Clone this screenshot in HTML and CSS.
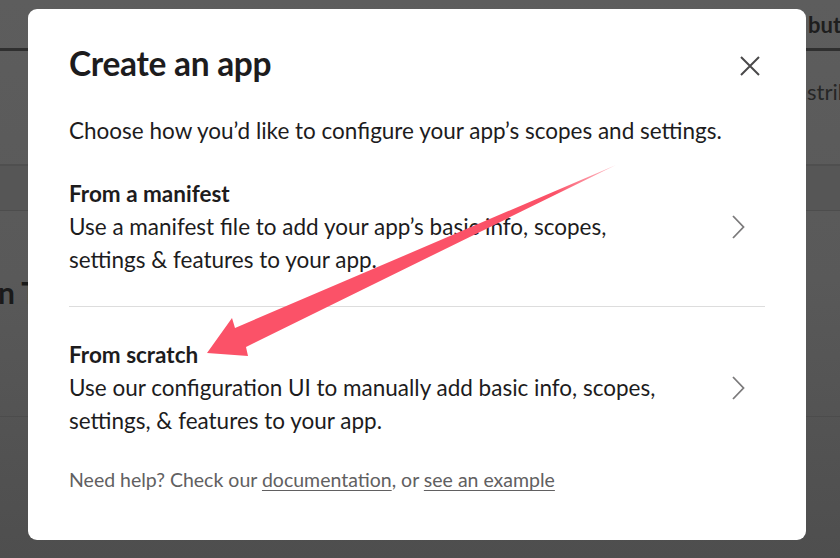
FILE: index.html
```html
<!DOCTYPE html>
<html lang="en">
<head>
<meta charset="utf-8">
<title>Create an app</title>
<link rel="stylesheet" href="styles.css">
</head>
<body>
<div class="page">
  <div class="page-top"><span class="tab">bution</span></div>
  <div class="page-sub"><span class="sub-text">stribution</span></div>
  <div class="page-band"></div>
  <div class="page-section"><span class="section-title">n Tools</span></div>
</div>

<div class="modal" role="dialog">
  <div class="modal-header">
    <h1 class="modal-title">Create an app</h1>
    <button class="close" aria-label="Close">
      <svg width="20" height="20" viewBox="0 0 20 20"><path d="M1 1 L19 19 M19 1 L1 19" stroke="#4a494a" stroke-width="2" fill="none"/></svg>
    </button>
  </div>
  <p class="modal-intro">Choose how you’d like to configure your app’s scopes and settings.</p>
  <div class="options">
    <div class="option">
      <div class="option-text">
        <div class="option-title">From a manifest</div>
        <div class="option-desc">Use a manifest file to add your app’s basic info, scopes,<br>settings &amp; features to your app.</div>
      </div>
      <svg class="chev" width="14" height="24" viewBox="0 0 14 24"><path d="M2 1 L12.5 12 L2 23" stroke="#7b7a7b" stroke-width="1.8" fill="none"/></svg>
    </div>
    <div class="option">
      <div class="option-text">
        <div class="option-title">From scratch</div>
        <div class="option-desc">Use our configuration UI to manually add basic info, scopes,<br>settings, &amp; features to your app.</div>
      </div>
      <svg class="chev" width="14" height="24" viewBox="0 0 14 24"><path d="M2 1 L12.5 12 L2 23" stroke="#7b7a7b" stroke-width="1.8" fill="none"/></svg>
    </div>
  </div>
  <p class="help">Need help? Check our <a href="#">documentation</a>, or <a href="#">see an example</a></p>
</div>

<svg class="annotation" width="840" height="558" viewBox="0 0 840 558">
  <defs>
    <linearGradient id="tail" x1="207" y1="352" x2="616" y2="165" gradientUnits="userSpaceOnUse">
      <stop offset="0" stop-color="#fb5268"/>
      <stop offset="0.85" stop-color="#fb5268"/>
      <stop offset="1" stop-color="#fb5268" stop-opacity="0.35"/>
    </linearGradient>
  </defs>
  <polygon points="207,353 232,318 235,328 616,165 246,347 248,356" fill="url(#tail)"/>
</svg>
</body>
</html>
```

FILE: styles.css
```css
html, body {
  margin: 0;
  padding: 0;
}
body {
  width: 840px;
  height: 558px;
  overflow: hidden;
  background: linear-gradient(180deg, #5d5d5d 0%, #595959 50%, #4e4e4e 100%);
  font-family: Lato, "Noto Sans", sans-serif;
  color: #1d1c1d;
  position: relative;
}

/* dimmed page behind the modal */
.page {
  width: 840px;
  height: 558px;
}
.page-top {
  height: 48px;
  border-bottom: 3px solid #2f2f2f;
  padding-left: 806px;
  overflow: hidden;
  white-space: nowrap;
}
.tab {
  display: block;
  margin-left: 2px;
  padding-top: 13px;
  font-size: 22px;
  font-weight: 700;
  color: #1e1e1e;
  line-height: 24px;
}
.page-sub {
  height: 113px;
  border-bottom: 2px solid #4f4f4f;
  padding-left: 806px;
  overflow: hidden;
  white-space: nowrap;
}
.sub-text {
  display: block;
  margin-left: 1px;
  padding-top: 28px;
  font-size: 22px;
  color: #262626;
  line-height: 26px;
}
.page-band {
  height: 44px;
  border-bottom: 1px solid #4d4d4d;
  background: #565656;
}
.page-section {
  height: 205px;
  border-bottom: 1px solid #4c4c4c;
  overflow: hidden;
  white-space: nowrap;
}
.section-title {
  display: block;
  margin-left: -2px;
  padding-top: 63px;
  font-size: 30px;
  font-weight: 700;
  color: #1a1a1a;
  line-height: 36px;
}

/* modal */
.modal {
  position: absolute;
  left: 28px;
  top: 9px;
  width: 778px;
  height: 531px;
  box-sizing: border-box;
  padding: 35px 41px 0 41px;
  background: #ffffff;
  border-radius: 9px;
  display: flex;
  flex-direction: column;
}
.modal-header {
  display: flex;
  align-items: center;
  justify-content: space-between;
  height: 38px;
}
.modal-title {
  margin: 0;
  font-size: 33.5px;
  line-height: 38px;
  font-weight: 700;
  color: #1d1c1d;
  letter-spacing: -0.3px;
}
.close {
  width: 30px;
  height: 30px;
  padding: 0;
  margin-top: 6px;
  border: none;
  background: none;
  display: flex;
  align-items: center;
  justify-content: center;
}
.modal-intro {
  margin: 34px 0 0 0;
  font-size: 22.5px;
  line-height: 30px;
  color: #1d1c1d;
}
.options {
  display: flex;
  flex-direction: column;
}
.option {
  display: flex;
  align-items: center;
  justify-content: space-between;
  padding: 31px 0 30px 0;
  border-bottom: 1px solid #dddddd;
}
.option:last-child {
  border-bottom: none;
}
.option-title {
  font-size: 22.5px;
  line-height: 33px;
  font-weight: 700;
  color: #1d1c1d;
}
.option-desc {
  font-size: 22.5px;
  line-height: 33px;
  color: #1d1c1d;
}
.chev {
  margin-right: 20px;
}
.help {
  margin: 0;
  font-size: 19.5px;
  line-height: 26px;
  color: #616061;
}
.help a {
  color: #616061;
  text-decoration: underline;
  text-underline-offset: 3px;
  text-decoration-thickness: 1px;
}

/* annotation arrow drawn over the screenshot */
.annotation {
  position: absolute;
  left: 0;
  top: 0;
  pointer-events: none;
}
```
